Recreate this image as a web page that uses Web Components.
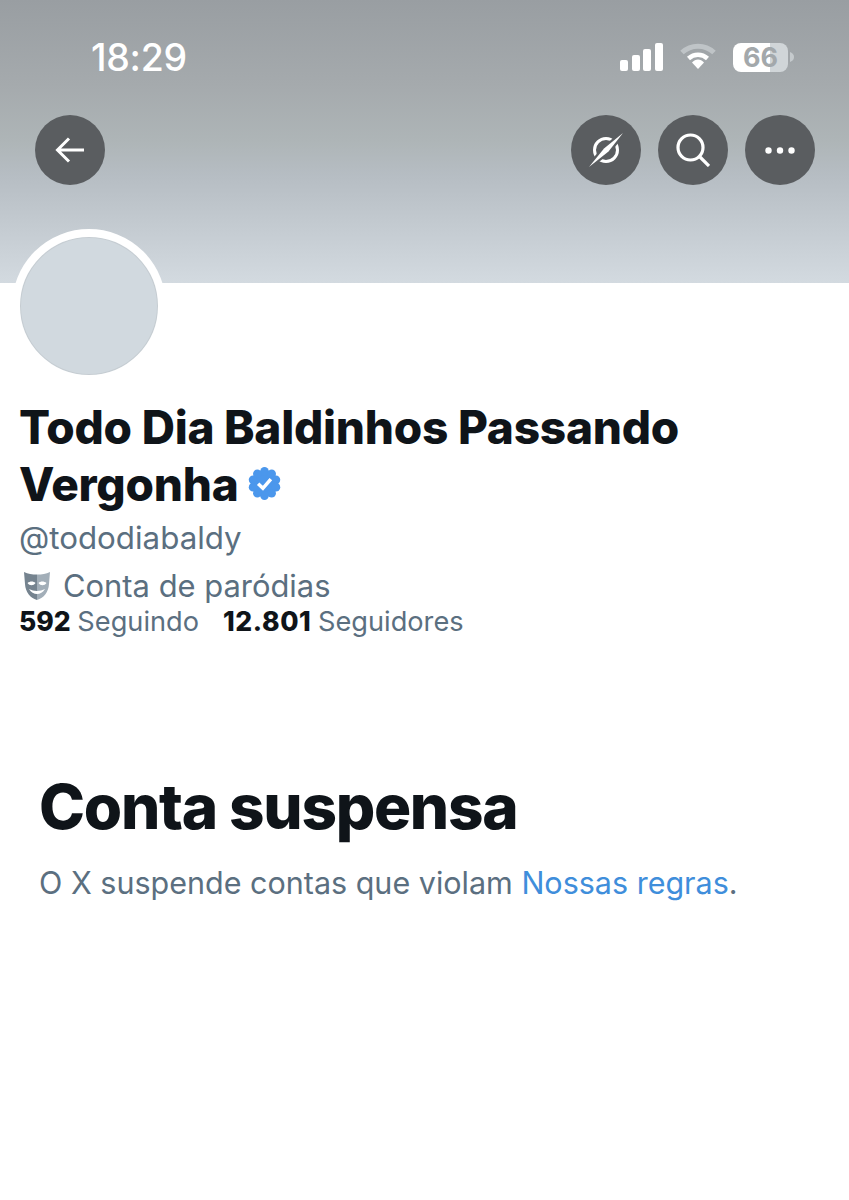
<!DOCTYPE html>
<html lang="pt">
<head>
<meta charset="utf-8">
<title>Conta suspensa</title>
<style>
  html, body { margin: 0; background: #fff; }
  body { font-family: Inter, "Liberation Sans", sans-serif; }
</style>
</head>
<body>
<profile-header></profile-header>
<profile-info></profile-info>
<suspended-notice></suspended-notice>

<script>
class StatusBar extends HTMLElement {
  constructor() {
    super();
    this.attachShadow({ mode: "open" }).innerHTML = `
      <style>
        :host { display: flex; align-items: center; height: 38px; padding: 0 54px 0 91px; color: #fff; }
        .time { font-size: 37.5px; font-weight: 500; letter-spacing: -0.3px; line-height: 38px; flex: 1; padding-top: 2px; }
        .icons { display: flex; align-items: center; gap: 17px; }
        .battery { width: 55px; height: 29px; border-radius: 8px;
          background: linear-gradient(90deg, #fff 0 67%, #d0d5d8 67%); text-align: center; }
        .battery span { font-size: 27px; font-weight: 700; line-height: 29px; color: #a3a8ab; display: block; }
        .cell { display: flex; align-items: center; }
      </style>
      <div class="time">18:29</div>
      <div class="icons">
        <svg width="43" height="28" viewBox="0 0 43 28" fill="#fff">
          <rect x="0" y="17" width="8" height="11" rx="2"/>
          <rect x="12" y="12" width="8" height="16" rx="2"/>
          <rect x="23" y="6" width="8" height="22" rx="2"/>
          <rect x="35" y="0" width="8" height="28" rx="2"/>
        </svg>
        <svg width="36" height="28" viewBox="0 0 36 28">
          <path d="M2 9.500C11 1 25 1 34 9.500" fill="none" stroke="#bfc4c7" stroke-width="5"/>
          <path d="M8.500 15.500C14 10.500 22 10.500 27.500 15.500" fill="none" stroke="#fff" stroke-width="4.500"/>
          <path d="M12 19.500C15.500 15.500 20.500 15.500 24 19.500L18 26Z" fill="#fff"/>
        </svg>
        <div class="cell">
          <div class="battery"><span>66</span></div>
          <svg width="5" height="10" viewBox="0 0 5 10" style="margin-left:2px"><path d="M0 0C3 1 4 3 4 5S3 9 0 10Z" fill="#c5cacd"/></svg>
        </div>
      </div>`;
  }
}

class RoundButton extends HTMLElement {
  constructor() {
    super();
    this.attachShadow({ mode: "open" }).innerHTML = `
      <style>
        :host { display: flex; align-items: center; justify-content: center; width: 70px; height: 70px;
          border-radius: 50%; background: #5a5d60; }
      </style>
      <slot></slot>`;
  }
}

class ProfileHeader extends HTMLElement {
  constructor() {
    super();
    this.attachShadow({ mode: "open" }).innerHTML = `
      <style>
        :host { display: block; height: 283px; box-sizing: border-box; padding-top: 38px;
          background: linear-gradient(180deg, #999ea2 0%, #a5aaad 30%, #aeb5b7 50%, #b6bdc3 62%, #d3dae0 100%); }
        .actions { display: flex; align-items: center; gap: 17px; margin-top: 39px; padding: 0 34px 0 35px; }
        .spacer { flex: 1; }
      </style>
      <status-bar></status-bar>
      <div class="actions">
        <round-button>
          <svg width="30" height="26" viewBox="0 0 30 26" fill="none" stroke="#fff" stroke-width="3"><path d="M29 13H3M14 1.500 2.500 13 14 24.500"/></svg>
        </round-button>
        <div class="spacer"></div>
        <round-button>
          <svg width="38" height="38" viewBox="0 0 38 38" fill="none">
            <circle cx="19" cy="19" r="11.500" stroke="#fff" stroke-width="3"/>
            <path d="M36 2 21.500 20.500 2 36 17 17.500Z" fill="#fff" stroke="#5a5d60" stroke-width="4.500" stroke-linejoin="round" paint-order="stroke"/>
          </svg>
        </round-button>
        <round-button>
          <svg width="34" height="34" viewBox="0 0 34 34" fill="none" stroke="#fff" stroke-width="3.200"><circle cx="14.500" cy="14.500" r="12.500"/><path d="M23.500 23.500 33 33"/></svg>
        </round-button>
        <round-button>
          <svg width="30" height="7" viewBox="0 0 30 7" fill="#fff"><circle cx="3.500" cy="3.500" r="3.200"/><circle cx="15" cy="3.500" r="3.200"/><circle cx="26.500" cy="3.500" r="3.200"/></svg>
        </round-button>
      </div>`;
  }
}

class ProfileAvatar extends HTMLElement {
  constructor() {
    super();
    this.attachShadow({ mode: "open" }).innerHTML = `
      <style>
        :host { display: block; position: absolute; left: 12px; top: 229px; width: 138px; height: 138px;
          border: 8px solid #fff; border-radius: 50%; background: #d1d9df; box-shadow: inset 0 0 0 1px #c6cdd2; }
      </style>`;
  }
}

class ProfileInfo extends HTMLElement {
  constructor() {
    super();
    this.attachShadow({ mode: "open" }).innerHTML = `
      <style>
        :host { display: block; padding: 116px 19px 0; color: #0f1419; }
        h1 { margin: 0; font-size: 46px; line-height: 57px; font-weight: 800; letter-spacing: -0.25px; }
        .badge { display: inline-block; vertical-align: 0; margin-left: -1px; }
        .handle { margin-top: 5px; font-size: 31.3px; line-height: 40px; color: #5b6f80; }
        .label { display: flex; align-items: center; gap: 13px; margin-top: 9px; font-size: 30.900px; line-height: 38px; color: #5b6f80; }
        .label svg { margin-left: 5px; }
        .counts { display: flex; gap: 24px; font-size: 27.200px; line-height: 32px; color: #5b6f80; word-spacing: -1px; }
        b { color: #0f1419; font-weight: 800; font-size: 26.500px; }
        b.wide { letter-spacing: 0.6px; }
      </style>
      <h1>Todo Dia Baldinhos Passando<br>Vergonha
        <svg class="badge" width="35" height="35" viewBox="0 0 22 22" fill="#4b97ec">
          <circle cx="11" cy="11" r="8.500"/>
          <circle cx="11" cy="3.400" r="2.700"/><circle cx="15.500" cy="4.900" r="2.700"/><circle cx="18.200" cy="8.700" r="2.700"/>
          <circle cx="18.200" cy="13.300" r="2.700"/><circle cx="15.500" cy="17.100" r="2.700"/><circle cx="11" cy="18.600" r="2.700"/>
          <circle cx="6.500" cy="17.100" r="2.700"/><circle cx="3.800" cy="13.300" r="2.700"/><circle cx="3.800" cy="8.700" r="2.700"/><circle cx="6.500" cy="4.900" r="2.700"/>
          <path fill="none" stroke="#fff" stroke-width="2.200" d="M7 11.200 10 14l5-5.800"/>
        </svg>
      </h1>
      <div class="handle">@tododiabaldy</div>
      <div class="label">
        <svg width="26" height="28" viewBox="0 0 26 28">
          <path fill="#75838f" d="M0 0C4 2 8 2.500 13 2.500V28C6 26 1.500 20 1 12Z"/>
          <path fill="#a2aeb8" d="M26 0C22 2 18 2.500 13 2.500V28C20 26 24.500 20 25 12Z"/>
          <path fill="#fff" d="M3.500 11c2.500-2 6-2 8 0-2 3-6 3-8 0ZM22.500 11c-2.500-2-6-2-8 0 2 3 6 3 8 0ZM5 17c5 2.500 11 2.500 16 0-2 3.500-5 5-8 5s-6-1.500-8-5Z"/>
        </svg>
        <span>Conta de paródias</span>
      </div>
      <div class="counts">
        <span><b>592</b> Seguindo</span>
        <span><b class="wide">12.801</b> Seguidores</span>
      </div>`;
  }
}

class SuspendedNotice extends HTMLElement {
  constructor() {
    super();
    this.attachShadow({ mode: "open" }).innerHTML = `
      <style>
        :host { display: block; padding: 133px 39px 0; color: #0f1419; }
        h2 { margin: 0; font-size: 62px; line-height: 72px; font-weight: 800; letter-spacing: -1.300px; }
        p { margin: 20px 0 0; font-size: 30.500px; line-height: 40px; color: #5b6f80; }
        a { color: #3f8edb; text-decoration: none; }
      </style>
      <h2>Conta suspensa</h2>
      <p>O X suspende contas que violam <a href="#">Nossas regras</a>.</p>`;
  }
}

customElements.define("status-bar", StatusBar);
customElements.define("round-button", RoundButton);
customElements.define("profile-header", ProfileHeader);
customElements.define("profile-avatar", ProfileAvatar);
customElements.define("profile-info", ProfileInfo);
customElements.define("suspended-notice", SuspendedNotice);

document.body.appendChild(document.createElement("profile-avatar"));
</script>
</body>
</html>
